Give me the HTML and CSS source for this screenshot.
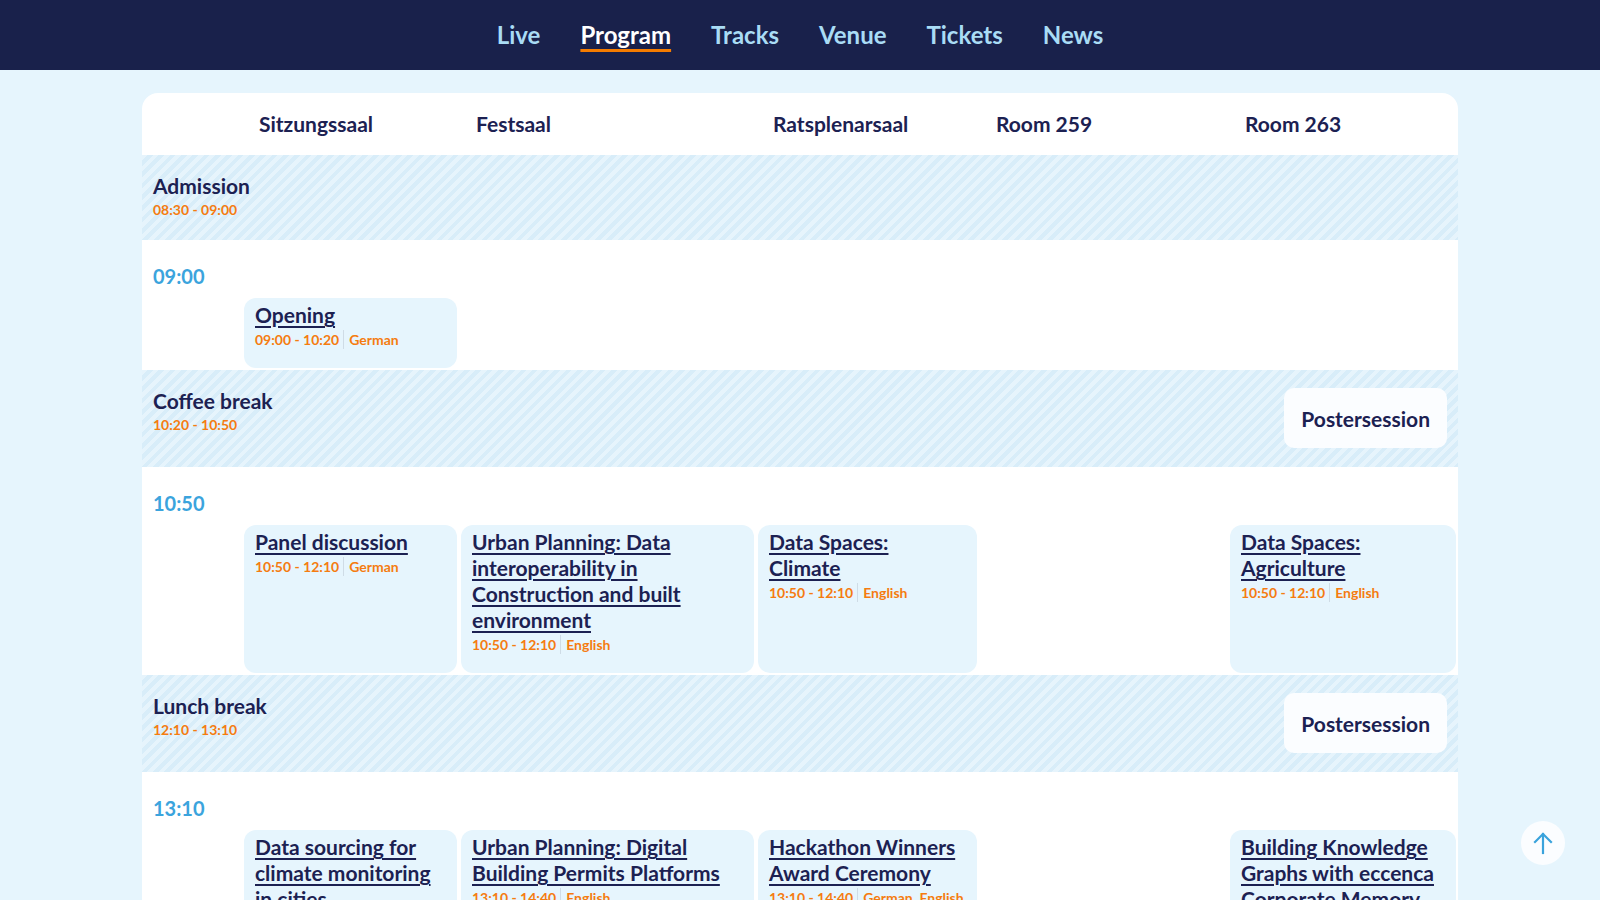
FILE: index.html
```html
<!DOCTYPE html>
<html lang="en">
<head>
<meta charset="utf-8">
<title>Program</title>
<link rel="stylesheet" href="styles.css">
</head>
<body>
<header class="topbar">
  <nav class="nav">
    <a class="nav-link" href="#">Live</a>
    <a class="nav-link active" href="#">Program</a>
    <a class="nav-link" href="#">Tracks</a>
    <a class="nav-link" href="#">Venue</a>
    <a class="nav-link" href="#">Tickets</a>
    <a class="nav-link" href="#">News</a>
  </nav>
</header>

<main class="page">
  <section class="schedule">
    <div class="slot-grid rooms">
      <div></div>
      <div class="room">Sitzungssaal</div>
      <div class="room">Festsaal</div>
      <div class="room">Ratsplenarsaal</div>
      <div class="room">Room 259</div>
      <div class="room">Room 263</div>
    </div>

    <div class="break">
      <div>
        <div class="break-title">Admission</div>
        <div class="break-time">08:30 - 09:00</div>
      </div>
    </div>

    <div class="time-label">09:00</div>
    <div class="slot-grid">
      <div></div>
      <a class="card" href="#">
        <span class="card-title">Opening</span>
        <span class="meta"><span>09:00 - 10:20</span><span class="lang">German</span></span>
      </a>
    </div>

    <div class="break">
      <div>
        <div class="break-title">Coffee break</div>
        <div class="break-time">10:20 - 10:50</div>
      </div>
      <div class="poster">Postersession</div>
    </div>

    <div class="time-label">10:50</div>
    <div class="slot-grid">
      <div></div>
      <a class="card" href="#">
        <span class="card-title">Panel discussion</span>
        <span class="meta"><span>10:50 - 12:10</span><span class="lang">German</span></span>
      </a>
      <a class="card" href="#">
        <span class="card-title">Urban Planning: Data interoperability in Construction and built environment</span>
        <span class="meta"><span>10:50 - 12:10</span><span class="lang">English</span></span>
      </a>
      <a class="card" href="#">
        <span class="card-title">Data Spaces: Climate</span>
        <span class="meta"><span>10:50 - 12:10</span><span class="lang">English</span></span>
      </a>
      <div></div>
      <a class="card" href="#">
        <span class="card-title">Data Spaces: Agriculture</span>
        <span class="meta"><span>10:50 - 12:10</span><span class="lang">English</span></span>
      </a>
    </div>

    <div class="break">
      <div>
        <div class="break-title">Lunch break</div>
        <div class="break-time">12:10 - 13:10</div>
      </div>
      <div class="poster">Postersession</div>
    </div>

    <div class="time-label">13:10</div>
    <div class="slot-grid">
      <div></div>
      <a class="card" href="#">
        <span class="card-title">Data sourcing for climate monitoring in cities</span>
        <span class="meta"><span>13:10 - 14:40</span><span class="lang">English</span></span>
      </a>
      <a class="card" href="#">
        <span class="card-title">Urban Planning: Digital Building Permits Platforms</span>
        <span class="meta"><span>13:10 - 14:40</span><span class="lang">English</span></span>
      </a>
      <a class="card" href="#">
        <span class="card-title">Hackathon Winners Award Ceremony</span>
        <span class="meta"><span>13:10 - 14:40</span><span class="lang">German, English</span></span>
      </a>
      <div></div>
      <a class="card" href="#">
        <span class="card-title">Building Knowledge Graphs with eccenca Corporate Memory</span>
        <span class="meta"><span>13:10 - 14:40</span><span class="lang">English</span></span>
      </a>
    </div>
  </section>
</main>

<a class="to-top" href="#" aria-label="Back to top">
  <svg width="22" height="24" viewBox="0 0 22 24" fill="none" stroke="#3aa3dc" stroke-width="2.2" stroke-linecap="square">
    <path d="M11 22V3"/>
    <path d="M3 11L11 3L19 11"/>
  </svg>
</a>
</body>
</html>
```

FILE: styles.css
```css
* {
  box-sizing: border-box;
}

html, body {
  margin: 0;
  padding: 0;
}

body {
  background: #e6f5fd;
  font-family: Lato, "Open Sans", sans-serif;
  color: #1c2152;
}

.topbar {
  background: #19214b;
  height: 70px;
  display: flex;
  align-items: center;
  justify-content: center;
}

.nav {
  display: flex;
  gap: 40px;
}

.nav-link {
  color: #a9dcf5;
  text-decoration: none;
  font-size: 24px;
  font-weight: 700;
  line-height: 30px;
}

.nav-link.active {
  color: #ffffff;
  text-decoration: underline;
  text-decoration-color: #f57c00;
  text-decoration-thickness: 3px;
  text-underline-offset: 5px;
  text-decoration-skip-ink: auto;
}

.page {
  padding: 23px 0 60px 142px;
}

.schedule {
  width: 1316px;
  background: #ffffff;
  border-radius: 16px 16px 0 0;
}

.slot-grid {
  display: grid;
  grid-template-columns: 98px 213px 293px 219px 245px 226px;
  column-gap: 4px;
}

.rooms {
  height: 60px;
  align-items: center;
}

.room {
  padding-left: 15px;
  font-size: 21px;
  font-weight: 700;
}

.break {
  margin-top: 2px;
  padding: 18px 11px 19px;
  display: flex;
  justify-content: space-between;
  align-items: flex-start;
  background: repeating-linear-gradient(135deg, #e6f4fc 0 4px, #d8edf9 4px 8px);
}

.break-title {
  font-size: 21px;
  font-weight: 700;
  line-height: 26px;
}

.break-time,
.meta {
  font-size: 14px;
  font-weight: 700;
  line-height: 22px;
  color: #f57c10;
}

.poster {
  height: 60px;
  padding: 0 17px;
  display: flex;
  align-items: center;
  background: #fbfdff;
  border-radius: 10px;
  font-size: 21px;
  font-weight: 700;
}

.time-label {
  padding: 23px 11px 9px;
  font-size: 20px;
  font-weight: 700;
  line-height: 26px;
  color: #3ba4dd;
}

.card {
  display: flex;
  flex-direction: column;
  padding: 4px 12px 19px 11px;
  background: #e6f5fd;
  border-radius: 12px;
  color: #1c2152;
  text-decoration: none;
}

.card-title {
  font-size: 21px;
  font-weight: 700;
  line-height: 26px;
  text-decoration: underline;
  text-decoration-thickness: 1.5px;
  text-underline-offset: 3px;
}

.meta {
  display: flex;
  margin-top: 2px;
  line-height: 19px;
}

.lang {
  margin-left: 4px;
  padding-left: 5px;
  border-left: 1px solid #cfdce6;
}

.to-top {
  position: fixed;
  right: 35px;
  bottom: 35px;
  width: 44px;
  height: 44px;
  border-radius: 50%;
  background: #fbfdff;
  display: flex;
  align-items: center;
  justify-content: center;
}
```
